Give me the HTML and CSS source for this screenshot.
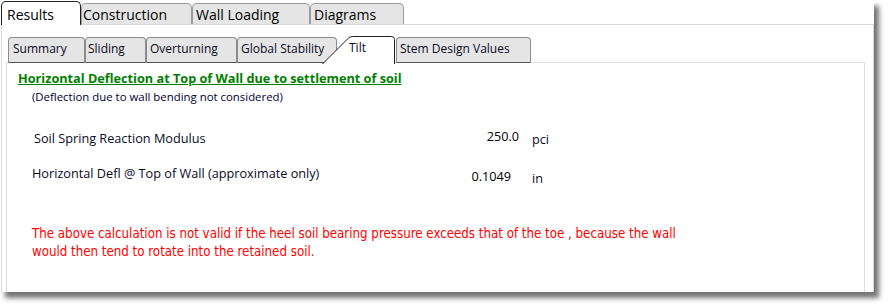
FILE: index.html
```html
<!DOCTYPE html>
<html>
<head>
<meta charset="utf-8">
<link rel="stylesheet" href="styles.css">
</head>
<body>
<div class="window">
  <div class="tabs">
    <div class="tab active t-results">Results</div>
    <div class="tab t-construction">Construction</div>
    <div class="tab t-wall">Wall Loading</div>
    <div class="tab t-diagrams">Diagrams</div>
  </div>
  <div class="panel">
    <div class="subtabs">
      <div class="subtab s-summary">Summary</div>
      <div class="subtab s-sliding">Sliding</div>
      <div class="subtab s-overturning">Overturning</div>
      <div class="subtab s-global">Global Stability</div>
      <div class="subtab-active">
        <svg class="tilt-shape" width="74" height="28" viewBox="0 0 74 28">
          <path d="M0.5 28 L25.5 3 Q27.5 0.5 30.5 0.5 L69.5 0.5 Q72.5 0.5 72.5 3.5 L72.5 28" fill="#fff" stroke="#1e1e1e" stroke-width="1"/>
        </svg>
        <span class="tilt-label">Tilt</span>
      </div>
      <div class="subtab s-stem">Stem Design Values</div>
    </div>
    <div class="subpanel">
      <h1 class="heading">Horizontal Deflection at Top of Wall due to settlement of soil</h1>
      <p class="note">(Deflection due to wall bending not considered)</p>
      <div class="row row-one">
        <span class="label">Soil Spring Reaction Modulus</span>
        <span class="value">250.0</span>
        <span class="unit">pci</span>
      </div>
      <div class="row row-two">
        <span class="label">Horizontal Defl @ Top of Wall (approximate only)</span>
        <span class="value">0.1049</span>
        <span class="unit">in</span>
      </div>
      <p class="warning">The above calculation is not valid if the heel soil bearing pressure exceeds that of the toe , because the wall<br>would then tend to rotate into the retained soil.</p>
    </div>
  </div>
</div>
</body>
</html>
```

FILE: styles.css
```css
* {
  box-sizing: border-box;
  margin: 0;
  padding: 0;
}

body {
  margin: 0;
  width: 890px;
  height: 307px;
  overflow: hidden;
  background: #fff;
  font-family: "Open Sans", "Noto Sans", sans-serif;
  color: #000;
}

.window {
  width: 874px;
  height: 292px;
  background: #fff;
  box-shadow: 5px 6px 5px rgba(0, 0, 0, 0.55);
  overflow: hidden;
  display: flex;
  flex-direction: column;
}

/* ---------- top tabs ---------- */
.tabs {
  display: flex;
  align-items: flex-end;
  height: 24px;
  padding-left: 1px;
  position: relative;
  z-index: 2;
  flex: none;
}

.tab {
  height: 21px;
  border: 1px solid #9b9b9b;
  border-bottom: none;
  border-radius: 5px 5px 0 0;
  background: #e5e5e5;
  font-size: 14px;
  line-height: 18px;
  padding: 2px 0 0 3px;
  white-space: nowrap;
  flex: none;
}

.tab.active {
  height: 24px;
  margin-bottom: -1px;
  background: #fff;
  border-color: #222;
  padding: 4px 0 0 5px;
}

.t-results { width: 80px; }
.t-construction { width: 111px; padding-left: 1px; }
.t-wall { width: 118px; }
.t-diagrams { width: 94px; }

/* ---------- outer panel ---------- */
.panel {
  flex: none;
  margin-left: 1px;
  width: 873px;
  height: 290px;
  border: 1px solid #d9d9d9;
  padding: 11px 8px 0 4px;
}

.subtabs {
  display: flex;
  align-items: flex-end;
  height: 27px;
  padding-left: 2px;
  position: relative;
  z-index: 2;
}

.subtab {
  height: 26px;
  border: 1px solid #8c8c8c;
  border-bottom-color: #555;
  border-radius: 4px 4px 0 0;
  background: #e5e5e5;
  font-size: 12px;
  line-height: 16px;
  padding: 3px 0 0 3px;
  white-space: nowrap;
  color: #0a0a1e;
  flex: none;
}

.s-summary { width: 77px; padding-left: 4px; }
.s-sliding { width: 61px; padding-left: 2px; }
.s-overturning { width: 91px; }
.s-global { width: 100px; }
.s-stem { width: 135px; }

.subtab-active {
  position: relative;
  flex: none;
  width: 74px;
  height: 28px;
  margin-left: -15px;
  margin-bottom: -1px;
  font-size: 12px;
  line-height: 16px;
  color: #0a0a1e;
}

.tilt-shape {
  position: absolute;
  left: 0;
  top: 0;
}

.tilt-label {
  position: relative;
  display: block;
  padding: 4px 0 0 27px;
}

/* ---------- inner panel ---------- */
.subpanel {
  margin-top: -1px;
  height: 240px;
  border: 1px solid #dcdcdc;
}

.heading {
  margin: 7px 0 0 11px;
  font-size: 12.7px;
  line-height: 16px;
  font-weight: 700;
  color: #008000;
  text-decoration: underline;
  white-space: nowrap;
}

.note {
  margin: 4px 0 0 25px;
  font-size: 11.4px;
  line-height: 14px;
  color: #000033;
}

.row {
  display: grid;
  grid-template-columns: 433px 79px 1fr;
  align-items: start;
  font-size: 12.7px;
  line-height: 16px;
  color: #0a0a1e;
}

.row .value {
  text-align: right;
  color: #000;
}

.row-one {
  margin-top: 24px;
}
.row-one .label { padding-left: 27px; margin-top: 1.5px; }
.row-one .value { margin-top: 0; }
.row-one .unit { margin-top: 3px; padding-left: 13px; }

.row-two {
  margin-top: 18px;
}
.row-two .label { padding-left: 25px; }
.row-two .value { margin-top: 3px; padding-right: 8px; }
.row-two .unit { margin-top: 4.5px; padding-left: 13px; }

.warning {
  margin: 39px 0 0 25px;
  font-family: "Liberation Sans Narrow", "DejaVu Sans Condensed", "Liberation Sans", sans-serif;
  font-size: 13.2px;
  line-height: 18px;
  color: #ff0000;
}
```
